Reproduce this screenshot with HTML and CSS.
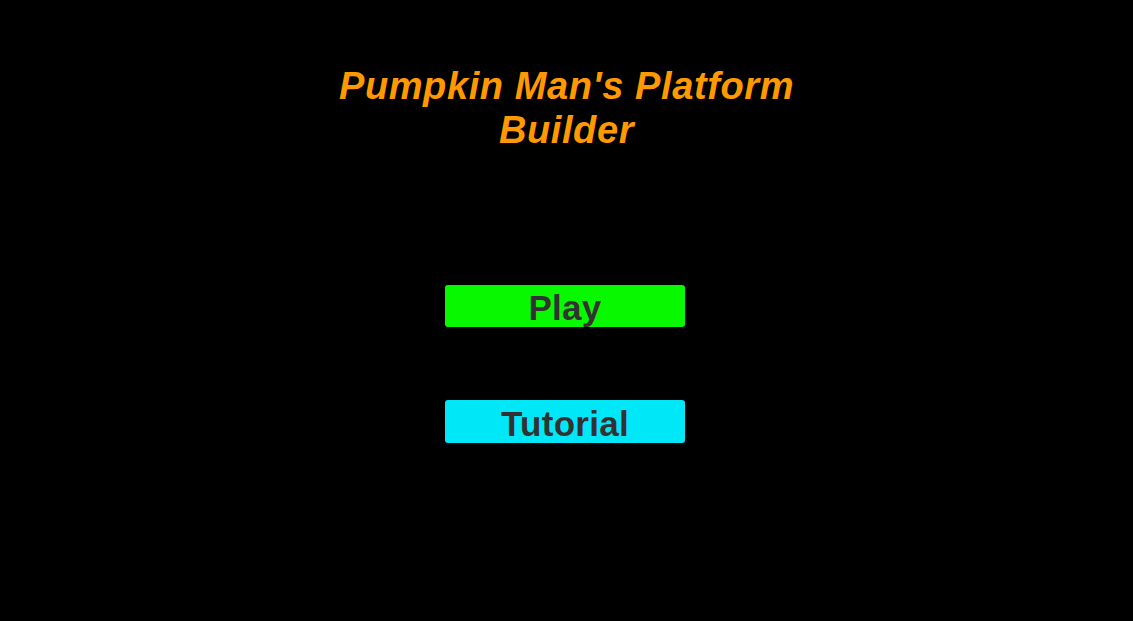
FILE: index.html
```html
<!DOCTYPE html>
<html lang="en">
<head>
  <meta charset="UTF-8" />
  <meta name="viewport" content="width=device-width, initial-scale=1.0"/>
  <title>Pumpkin Man's Platform Builder</title>
  <link rel="stylesheet" href="styles.css">
</head>
<body>
  <div class="menu">
    <h1 class="title">Pumpkin Man's Platform<br>Builder</h1>
    <div class="buttons">
      <button class="btn play">Play</button>
      <button class="btn tutorial">Tutorial</button>
    </div>
  </div>
</body>
</html>
```

FILE: styles.css
```css
html, body {
  margin: 0;
  height: 100%;
}
body {
  background: #000;
  font-family: "Liberation Sans", Arial, sans-serif;
}
.menu {
  display: flex;
  flex-direction: column;
  align-items: center;
  padding-top: 64px;
}
.title {
  margin: 0;
  color: #ff9900;
  font-size: 38px;
  font-style: italic;
  font-weight: bold;
  letter-spacing: 0.6px;
  line-height: 44px;
  text-align: center;
}
.buttons {
  display: flex;
  flex-direction: column;
  gap: 73px;
  margin-top: 133px;
  margin-left: -3px;
}
.btn {
  box-sizing: border-box;
  width: 240px;
  height: 42px;
  padding: 4px 0 0;
  border: none;
  border-radius: 3px;
  color: #323232;
  font-family: "Liberation Sans", Arial, sans-serif;
  font-size: 35px;
  font-weight: bold;
  letter-spacing: 0.3px;
  line-height: 38px;
  cursor: pointer;
}
.play {
  background: #08f800;
}
.tutorial {
  height: 43px;
  background: #00e8f8;
}
```
